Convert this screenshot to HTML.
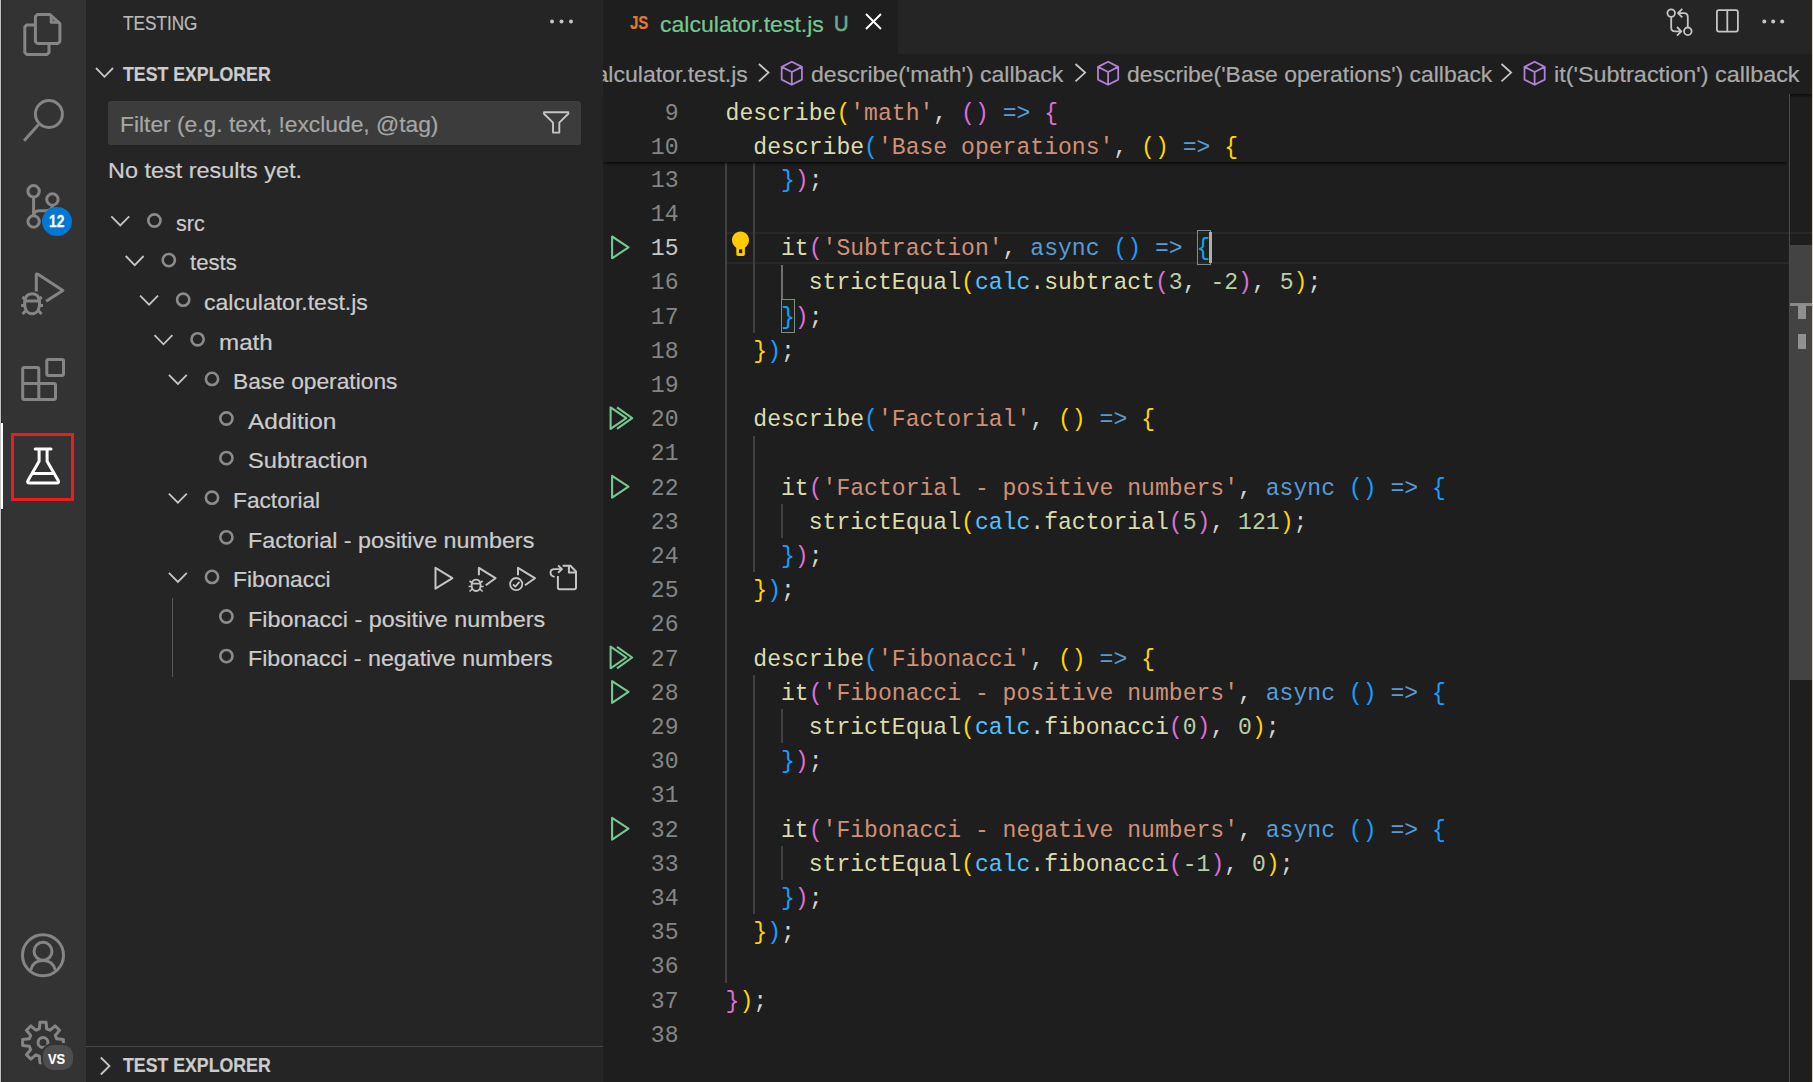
<!DOCTYPE html>
<html><head><meta charset="utf-8"><style>
*{box-sizing:border-box}
html,body{margin:0;padding:0;width:1813px;height:1082px;overflow:hidden;background:#1e1e1e}
.a{position:absolute}
.t{position:absolute;white-space:pre;font-family:'Liberation Sans',sans-serif;-webkit-text-stroke:0.2px currentColor}
.cl{position:absolute;height:34.2px;line-height:34.2px;font-family:'Liberation Mono',monospace;font-size:23.09px;white-space:pre}
.ln{position:absolute;left:620px;width:58.5px;text-align:right;height:34.2px;line-height:34.2px;font-family:'Liberation Mono',monospace;font-size:23.09px;color:#858585}
svg{position:absolute;overflow:visible}
</style></head><body>
<div class="a" style="left:0;top:0;width:1.3px;height:1082px;background:#c3c5c5"></div><div class="a" style="left:1811.6px;top:0;width:1.5px;height:1082px;background:#d6d2c6"></div><div class="a" style="left:1.3px;top:0;width:84.9px;height:1082px;background:#333333"></div><div class="a" style="left:1.3px;top:0;width:0.8px;height:1082px;background:#2a2a2a"></div><div class="a" style="left:86.2px;top:0;width:516.8px;height:1082px;background:#252526"></div><div class="a" style="left:603px;top:0;width:1208.6px;height:54px;background:#252526"></div><div class="a" style="left:603px;top:0;width:295.3px;height:54px;background:#1e1e1e"></div><div class="a" style="left:603px;top:54px;width:1208.6px;height:1028px;background:#1e1e1e"></div><svg style="left:0;top:0" width="86" height="1082" viewBox="0 0 86 1082" fill="none" stroke="#858585" stroke-width="3" stroke-linejoin="round">
<path d="M35.4,24.9 H26.8 L24.8,26.9 V52.5 L26.8,54.5 H47 L49,52.5 V45"/>
<path d="M37.4,14.5 H50 L59.9,23.6 V41.5 L57.9,43.5 H37.4 L35.4,41.5 V16.5 Z"/>
<path d="M51.2,15 V22.3 H59.5"/>
<circle cx="48.9" cy="114" r="13.5"/>
<path d="M38.6,124.4 L24.1,140.7" stroke-linecap="butt"/>
<circle cx="33.6" cy="191.3" r="5.7"/>
<circle cx="33.6" cy="221.5" r="5.7"/>
<circle cx="52.4" cy="199.5" r="5.7"/>
<path d="M33.6,197 V216"/>
<path d="M33.6,216 Q33.6,210.8 39,210.8 H46 Q52.4,210.8 52.4,205.2"/>
<path d="M36.3,291.4 V275 Q36.3,273.3 38,274.3 L62.9,290.4 L46.1,301.3"/>
<path d="M32.1,293.8 C26,293.8 24.6,299 24.6,303.5 C24.6,309.5 27.5,313.7 32.1,313.7 C36.7,313.7 39.6,309.5 39.6,303.5 C39.6,299 38.2,293.8 32.1,293.8 Z"/>
<path d="M25,301 H39.2 M22.5,297 L26,300 M41.7,297 L38.2,300 M21.2,305.5 H24.8 M39.4,305.5 H43 M22.5,314 L26,310.5 M41.7,314 L38.2,310.5" stroke-linecap="butt"/>
<path d="M48.3,359.5 H62 Q63.5,359.5 63.5,361 V373.9 Q63.5,375.4 62,375.4 H48.3 Q46.8,375.4 46.8,373.9 V361 Q46.8,359.5 48.3,359.5 Z"/>
<path d="M24.2,367.5 H37.3 Q38.8,367.5 38.8,369 V398 M22.7,383.5 H54 Q55.5,383.5 55.5,385 V398 Q55.5,399.5 54,399.5 H24.2 Q22.7,399.5 22.7,398 V369 Q22.7,367.5 24.2,367.5"/>
<circle cx="43" cy="955.3" r="20.5"/>
<circle cx="43" cy="951.3" r="9"/>
<path d="M30.8,970 Q33,960.5 43,960.5 Q53,960.5 55.2,970"/>
<path d="M39.32,1028.78 L39.96,1022.13 L46.04,1022.13 L46.68,1028.78 L50.10,1030.20 L55.25,1025.94 L59.56,1030.25 L55.30,1035.40 L56.72,1038.82 L63.37,1039.46 L63.37,1045.54 L56.72,1046.18 L55.30,1049.60 L59.56,1054.75 L55.25,1059.06 L50.10,1054.80 L46.68,1056.22 L46.04,1062.87 L39.96,1062.87 L39.32,1056.22 L35.90,1054.80 L30.75,1059.06 L26.44,1054.75 L30.70,1049.60 L29.28,1046.18 L22.63,1045.54 L22.63,1039.46 L29.28,1038.82 L30.70,1035.40 L26.44,1030.25 L30.75,1025.94 L35.90,1030.20 Z" stroke-width="3"/>
<circle cx="43" cy="1042.5" r="5"/>
</svg><div class="a" style="left:1.3px;top:422.8px;width:1.8px;height:86.4px;background:#ffffff"></div><div class="a" style="left:11px;top:433px;width:63px;height:68px;border:3px solid #ed1c1c"></div><svg style="left:0;top:0" width="86" height="1082" viewBox="0 0 86 1082" fill="none" stroke="#ffffff" stroke-width="3" stroke-linejoin="round" stroke-linecap="round">
<path d="M35.2,449.1 H51"/>
<path d="M39.1,449.5 V461.3 L28,480.5 Q26.8,483 29.5,483 H56.7 Q59.4,483 58.2,480.5 L47.1,461.3 V449.5"/>
<path d="M32.6,473.4 H53.6"/>
</svg><div class="a" style="left:42px;top:206.7px;width:30px;height:29.4px;border-radius:50%;background:#0078d4"></div><div class="t" style="left:49.10px;top:210.77px;font-size:15.6px;line-height:21.84px;color:#ffffff;font-weight:bold;transform:scaleX(0.88);transform-origin:0 0;-webkit-text-stroke:0.3px #fff;">12</div><div class="a" style="left:41.3px;top:1043.3px;width:33.6px;height:28.7px;border-radius:12px;background:#4d4d4d;border:2px solid #333333"></div><div class="t" style="left:47.90px;top:1048.72px;font-size:14.6px;line-height:20.44px;color:#ffffff;font-weight:bold;transform:scaleX(0.88);transform-origin:0 0;">VS</div><div class="t" style="left:123.30px;top:9.54px;font-size:19.55px;line-height:27.37px;color:#bbbbbb;transform:scaleX(0.88);transform-origin:0 0;">TESTING</div><svg style="left:0;top:0" width="603" height="60" fill="#c5c5c5"><circle cx="552" cy="21.5" r="2"/><circle cx="561.5" cy="21.5" r="2"/><circle cx="571" cy="21.5" r="2"/></svg><svg style="left:0;top:0" width="603" height="100" fill="none" stroke="#c5c5c5" stroke-width="1.8"><path d="M96,68 L104.5,76.8 L113,68"/></svg><div class="t" style="left:122.80px;top:60.60px;font-size:19.4px;line-height:27.16px;color:#cccccc;font-weight:bold;transform:scaleX(0.914);transform-origin:0 0;">TEST EXPLORER</div><div class="a" style="left:107.8px;top:101px;width:473.2px;height:44.4px;background:#3c3c3c;border-radius:3px"></div><div class="t" style="left:120.30px;top:108.61px;font-size:22.35px;line-height:31.29px;color:#a6a6a6;transform:scaleX(1.0206);transform-origin:0 0;">Filter (e.g. text, !exclude, @tag)</div><svg style="left:0;top:0" width="603" height="200" fill="none" stroke="#c5c5c5" stroke-width="1.9" stroke-linejoin="round"><path d="M544,112.3 H568.3 V113.8 L559.3,122.6 V132.6 H553 V122.6 L544,113.8 Z"/></svg><div class="t" style="left:108.20px;top:154.51px;font-size:22.35px;line-height:31.29px;color:#cccccc;transform:scaleX(1.0484);transform-origin:0 0;">No test results yet.</div><div class="t" style="left:175.50px;top:207.71px;font-size:22.35px;line-height:31.29px;color:#cccccc;transform:scaleX(0.9621);transform-origin:0 0;">src</div><div class="t" style="left:189.90px;top:247.31px;font-size:22.35px;line-height:31.29px;color:#cccccc;transform:scaleX(0.9936);transform-origin:0 0;">tests</div><div class="t" style="left:204.30px;top:286.91px;font-size:22.35px;line-height:31.29px;color:#cccccc;transform:scaleX(1.031);transform-origin:0 0;">calculator.test.js</div><div class="t" style="left:218.70px;top:326.51px;font-size:22.35px;line-height:31.29px;color:#cccccc;transform:scaleX(1.0813);transform-origin:0 0;">math</div><div class="t" style="left:233.10px;top:366.11px;font-size:22.35px;line-height:31.29px;color:#cccccc;transform:scaleX(1.0181);transform-origin:0 0;">Base operations</div><div class="t" style="left:247.50px;top:405.71px;font-size:22.35px;line-height:31.29px;color:#cccccc;transform:scaleX(1.0938);transform-origin:0 0;">Addition</div><div class="t" style="left:247.50px;top:445.31px;font-size:22.35px;line-height:31.29px;color:#cccccc;transform:scaleX(1.0595);transform-origin:0 0;">Subtraction</div><div class="t" style="left:233.10px;top:484.91px;font-size:22.35px;line-height:31.29px;color:#cccccc;transform:scaleX(1.0167);transform-origin:0 0;">Factorial</div><div class="t" style="left:247.50px;top:524.51px;font-size:22.35px;line-height:31.29px;color:#cccccc;transform:scaleX(1.0432);transform-origin:0 0;">Factorial - positive numbers</div><div class="t" style="left:233.10px;top:564.11px;font-size:22.35px;line-height:31.29px;color:#cccccc;transform:scaleX(1.0213);transform-origin:0 0;">Fibonacci</div><div class="t" style="left:247.50px;top:603.71px;font-size:22.35px;line-height:31.29px;color:#cccccc;transform:scaleX(1.0449);transform-origin:0 0;">Fibonacci - positive numbers</div><div class="t" style="left:247.50px;top:643.31px;font-size:22.35px;line-height:31.29px;color:#cccccc;transform:scaleX(1.039);transform-origin:0 0;">Fibonacci - negative numbers</div><svg style="left:0;top:0" width="603" height="1082" fill="none"><path d="M111.30,216.40 L120.30,225.50 L129.20,216.40" stroke="#c5c5c5" stroke-width="1.8"/><circle cx="154.40" cy="220.50" r="6.1" stroke="#8b8b8b" stroke-width="2.6"/><path d="M125.70,256.00 L134.70,265.10 L143.60,256.00" stroke="#c5c5c5" stroke-width="1.8"/><circle cx="168.80" cy="260.10" r="6.1" stroke="#8b8b8b" stroke-width="2.6"/><path d="M140.10,295.60 L149.10,304.70 L158.00,295.60" stroke="#c5c5c5" stroke-width="1.8"/><circle cx="183.20" cy="299.70" r="6.1" stroke="#8b8b8b" stroke-width="2.6"/><path d="M154.50,335.20 L163.50,344.30 L172.40,335.20" stroke="#c5c5c5" stroke-width="1.8"/><circle cx="197.60" cy="339.30" r="6.1" stroke="#8b8b8b" stroke-width="2.6"/><path d="M168.90,374.80 L177.90,383.90 L186.80,374.80" stroke="#c5c5c5" stroke-width="1.8"/><circle cx="212.00" cy="378.90" r="6.1" stroke="#8b8b8b" stroke-width="2.6"/><circle cx="226.40" cy="418.50" r="6.1" stroke="#8b8b8b" stroke-width="2.6"/><circle cx="226.40" cy="458.10" r="6.1" stroke="#8b8b8b" stroke-width="2.6"/><path d="M168.90,493.60 L177.90,502.70 L186.80,493.60" stroke="#c5c5c5" stroke-width="1.8"/><circle cx="212.00" cy="497.70" r="6.1" stroke="#8b8b8b" stroke-width="2.6"/><circle cx="226.40" cy="537.30" r="6.1" stroke="#8b8b8b" stroke-width="2.6"/><path d="M168.90,572.80 L177.90,581.90 L186.80,572.80" stroke="#c5c5c5" stroke-width="1.8"/><circle cx="212.00" cy="576.90" r="6.1" stroke="#8b8b8b" stroke-width="2.6"/><circle cx="226.40" cy="616.50" r="6.1" stroke="#8b8b8b" stroke-width="2.6"/><circle cx="226.40" cy="656.10" r="6.1" stroke="#8b8b8b" stroke-width="2.6"/></svg><div class="a" style="left:171.7px;top:598px;width:1.4px;height:78.8px;background:#585858"></div><svg style="left:0;top:0" width="603" height="1082" fill="none" stroke="#c5c5c5" stroke-width="2" stroke-linejoin="round">
<path d="M435.5,567.8 V588.7 L452.4,578.2 Z"/>
<path d="M478.9,575.2 V567.8 L495.5,578.2 L485.7,585.3"/>
<path d="M476.1,579.6 C472.8,579.6 471.6,582 471.6,585.2 C471.6,588.6 473.5,591 476.1,591 C478.7,591 480.6,588.6 480.6,585.2 C480.6,582 479.4,579.6 476.1,579.6 Z" stroke-width="1.8"/>
<path d="M471.8,583.6 H480.4 M469.5,581 L472.3,583 M482.7,581 L479.9,583 M468.6,586.5 H471.6 M480.6,586.5 H483.6 M469.5,591.5 L472.3,589 M482.7,591.5 L479.9,589" stroke-width="1.6"/>
<path d="M518,575.2 V567.8 L534.9,578.2 L525,585.3"/>
<circle cx="516.2" cy="584.1" r="6.1" stroke-width="1.8"/>
<path d="M513,584.5 L515.3,586.6 L519.5,581.8" stroke-width="1.8"/>
<path d="M557.9,576 V587.5 Q557.9,589.2 559.6,589.2 H574.3 Q576,589.2 576,587.5 V571.5 L570.4,565.8 H562.6"/>
<path d="M568.9,566 V572.4 H575.8"/>
<path d="M554.6,576.9 C551.5,576.3 550.5,574.5 550.5,572.6 C550.5,570.5 552,569.1 554.6,569.1 H562 M558.1,565.5 L562,569.1 L558.1,572.8" stroke-width="1.9"/>
</svg><div class="a" style="left:86.2px;top:1045.6px;width:516.8px;height:1.4px;background:#474747"></div><svg style="left:0;top:0" width="603" height="1082" fill="none" stroke="#c5c5c5" stroke-width="1.8"><path d="M100.8,1057.5 L109.5,1066 L100.8,1074.5"/></svg><div class="t" style="left:122.70px;top:1052.00px;font-size:19.4px;line-height:27.16px;color:#cccccc;font-weight:bold;transform:scaleX(0.914);transform-origin:0 0;">TEST EXPLORER</div><div class="t" style="left:629.70px;top:9.73px;font-size:18.8px;line-height:26.32px;color:#e37933;font-weight:bold;transform:scaleX(0.8);transform-origin:0 0;">JS</div><div class="t" style="left:660.10px;top:8.51px;font-size:22.35px;line-height:31.29px;color:#73c991;transform:scaleX(1.031);transform-origin:0 0;">calculator.test.js</div><div class="t" style="left:833.90px;top:8.80px;font-size:21.6px;line-height:30.24px;color:#66ad85;transform:scaleX(0.93);transform-origin:0 0;-webkit-text-stroke:0.7px #66ad85;">U</div><svg style="left:0;top:0" width="900" height="60" fill="none" stroke="#ffffff" stroke-width="1.9"><path d="M866,14 L881,29 M881,14 L866,29"/></svg><svg style="left:0;top:0" width="1813" height="60" fill="none" stroke="#c5c5c5" stroke-width="1.8" stroke-linejoin="round">
<circle cx="1671.2" cy="13.1" r="3.8"/>
<circle cx="1687.8" cy="31.3" r="3.8"/>
<path d="M1671.2,17 V27.5 Q1671.2,31.3 1675,31.3 H1681.3 M1677,27 L1681.3,31.3 L1677,35.6"/>
<path d="M1687.8,27.4 V17 Q1687.8,13.1 1684,13.1 H1678 M1682.3,8.8 L1678,13.1 L1682.3,17.4"/>
<rect x="1716.9" y="10.2" width="21" height="21.4" rx="2"/>
<path d="M1727.3,10.2 V31.6"/>
</svg><svg style="left:0;top:0" width="1813" height="60" fill="#c5c5c5"><circle cx="1764.3" cy="21.5" r="2"/><circle cx="1773.2" cy="21.5" r="2"/><circle cx="1782.2" cy="21.5" r="2"/></svg><div class="t" style="left:584.10px;top:59.41px;font-size:22.35px;line-height:31.29px;color:#a9a9a9;transform:scaleX(1.031);transform-origin:0 0;clip-path:inset(0 0 0 18.2px);">calculator.test.js</div><svg style="left:0;top:0" width="1813" height="100" fill="none"><path d="M758.90,64 L768.50,72.6 L758.90,81.3" stroke="#c5c5c5" stroke-width="1.8"/><path d="M791.80,61.7 L801.90,66.9 V79.6 L791.80,84.8 L781.70,79.6 V66.9 Z M781.70,66.9 L791.80,72 L801.90,66.9 M791.80,72 V84.8" stroke="#b180d7" stroke-width="1.8" stroke-linejoin="round"/><path d="M1075.50,64 L1085.10,72.6 L1075.50,81.3" stroke="#c5c5c5" stroke-width="1.8"/><path d="M1108.10,61.7 L1118.20,66.9 V79.6 L1108.10,84.8 L1098.00,79.6 V66.9 Z M1098.00,66.9 L1108.10,72 L1118.20,66.9 M1108.10,72 V84.8" stroke="#b180d7" stroke-width="1.8" stroke-linejoin="round"/><path d="M1501.50,64 L1511.10,72.6 L1501.50,81.3" stroke="#c5c5c5" stroke-width="1.8"/><path d="M1534.60,61.7 L1544.70,66.9 V79.6 L1534.60,84.8 L1524.50,79.6 V66.9 Z M1524.50,66.9 L1534.60,72 L1544.70,66.9 M1534.60,72 V84.8" stroke="#b180d7" stroke-width="1.8" stroke-linejoin="round"/></svg><div class="t" style="left:811.20px;top:59.41px;font-size:22.35px;line-height:31.29px;color:#a9a9a9;transform:scaleX(1.032);transform-origin:0 0;">describe('math') callback</div><div class="t" style="left:1127.00px;top:59.41px;font-size:22.35px;line-height:31.29px;color:#a9a9a9;transform:scaleX(1.0254);transform-origin:0 0;">describe('Base operations') callback</div><div class="t" style="left:1554.00px;top:59.41px;font-size:22.35px;line-height:31.29px;color:#a9a9a9;transform:scaleX(1.047);transform-origin:0 0;">it('Subtraction') callback</div><div class="a" style="left:725px;top:231.5px;width:1086.6px;height:32.6px;border-top:2.4px solid #282828;border-bottom:2.2px solid #282828"></div><div class="a" style="left:725.1px;top:162.0px;width:2px;height:820.8px;background:#404040"></div><div class="a" style="left:752.8px;top:162.0px;width:2px;height:171.0px;background:#404040"></div><div class="a" style="left:752.8px;top:435.6px;width:2px;height:136.8px;background:#404040"></div><div class="a" style="left:752.8px;top:675.0px;width:2px;height:239.4px;background:#404040"></div><div class="a" style="left:780.5px;top:264.6px;width:2px;height:34.2px;background:#707070"></div><div class="a" style="left:780.5px;top:504.0px;width:2px;height:34.2px;background:#404040"></div><div class="a" style="left:780.5px;top:709.2px;width:2px;height:34.2px;background:#404040"></div><div class="a" style="left:780.5px;top:846.0px;width:2px;height:34.2px;background:#404040"></div><div class="a" style="left:781.0px;top:298.8px;width:13.86px;height:34.2px;background:rgba(0,100,0,0.1);border:1.8px solid #888888"></div><div class="a" style="left:1196.7px;top:230.4px;width:13.86px;height:34.2px;background:rgba(0,100,0,0.1);border:1.8px solid #888888"></div><div class="ln" style="top:163.8px;">13</div><div class="cl" style="left:725.6px;top:163.8px"><span style="color:#d4d4d4">    </span><span style="color:#179fff">}</span><span style="color:#da70d6">)</span><span style="color:#d4d4d4">;</span></div><div class="ln" style="top:198.0px;">14</div><div class="ln" style="top:232.2px;color:#c6c6c6">15</div><div class="cl" style="left:725.6px;top:232.2px"><span style="color:#d4d4d4">    </span><span style="color:#dcdcaa">it</span><span style="color:#da70d6">(</span><span style="color:#ce9178">'Subtraction'</span><span style="color:#d4d4d4">, </span><span style="color:#569cd6">async</span><span style="color:#d4d4d4"> </span><span style="color:#179fff">()</span><span style="color:#d4d4d4"> </span><span style="color:#569cd6">=&gt;</span><span style="color:#d4d4d4"> </span><span style="color:#179fff">{</span></div><div class="ln" style="top:266.4px;">16</div><div class="cl" style="left:725.6px;top:266.4px"><span style="color:#d4d4d4">      </span><span style="color:#dcdcaa">strictEqual</span><span style="color:#ffd700">(</span><span style="color:#4fc1ff">calc</span><span style="color:#d4d4d4">.</span><span style="color:#dcdcaa">subtract</span><span style="color:#da70d6">(</span><span style="color:#b5cea8">3</span><span style="color:#d4d4d4">, </span><span style="color:#b5cea8">-2</span><span style="color:#da70d6">)</span><span style="color:#d4d4d4">, </span><span style="color:#b5cea8">5</span><span style="color:#ffd700">)</span><span style="color:#d4d4d4">;</span></div><div class="ln" style="top:300.6px;">17</div><div class="cl" style="left:725.6px;top:300.6px"><span style="color:#d4d4d4">    </span><span style="color:#179fff">}</span><span style="color:#da70d6">)</span><span style="color:#d4d4d4">;</span></div><div class="ln" style="top:334.8px;">18</div><div class="cl" style="left:725.6px;top:334.8px"><span style="color:#d4d4d4">  </span><span style="color:#ffd700">}</span><span style="color:#179fff">)</span><span style="color:#d4d4d4">;</span></div><div class="ln" style="top:369.0px;">19</div><div class="ln" style="top:403.2px;">20</div><div class="cl" style="left:725.6px;top:403.2px"><span style="color:#d4d4d4">  </span><span style="color:#dcdcaa">describe</span><span style="color:#179fff">(</span><span style="color:#ce9178">'Factorial'</span><span style="color:#d4d4d4">, </span><span style="color:#ffd700">()</span><span style="color:#d4d4d4"> </span><span style="color:#569cd6">=&gt;</span><span style="color:#d4d4d4"> </span><span style="color:#ffd700">{</span></div><div class="ln" style="top:437.4px;">21</div><div class="ln" style="top:471.6px;">22</div><div class="cl" style="left:725.6px;top:471.6px"><span style="color:#d4d4d4">    </span><span style="color:#dcdcaa">it</span><span style="color:#da70d6">(</span><span style="color:#ce9178">'Factorial - positive numbers'</span><span style="color:#d4d4d4">, </span><span style="color:#569cd6">async</span><span style="color:#d4d4d4"> </span><span style="color:#179fff">()</span><span style="color:#d4d4d4"> </span><span style="color:#569cd6">=&gt;</span><span style="color:#d4d4d4"> </span><span style="color:#179fff">{</span></div><div class="ln" style="top:505.8px;">23</div><div class="cl" style="left:725.6px;top:505.8px"><span style="color:#d4d4d4">      </span><span style="color:#dcdcaa">strictEqual</span><span style="color:#ffd700">(</span><span style="color:#4fc1ff">calc</span><span style="color:#d4d4d4">.</span><span style="color:#dcdcaa">factorial</span><span style="color:#da70d6">(</span><span style="color:#b5cea8">5</span><span style="color:#da70d6">)</span><span style="color:#d4d4d4">, </span><span style="color:#b5cea8">121</span><span style="color:#ffd700">)</span><span style="color:#d4d4d4">;</span></div><div class="ln" style="top:540.0px;">24</div><div class="cl" style="left:725.6px;top:540.0px"><span style="color:#d4d4d4">    </span><span style="color:#179fff">}</span><span style="color:#da70d6">)</span><span style="color:#d4d4d4">;</span></div><div class="ln" style="top:574.2px;">25</div><div class="cl" style="left:725.6px;top:574.2px"><span style="color:#d4d4d4">  </span><span style="color:#ffd700">}</span><span style="color:#179fff">)</span><span style="color:#d4d4d4">;</span></div><div class="ln" style="top:608.4px;">26</div><div class="ln" style="top:642.6px;">27</div><div class="cl" style="left:725.6px;top:642.6px"><span style="color:#d4d4d4">  </span><span style="color:#dcdcaa">describe</span><span style="color:#179fff">(</span><span style="color:#ce9178">'Fibonacci'</span><span style="color:#d4d4d4">, </span><span style="color:#ffd700">()</span><span style="color:#d4d4d4"> </span><span style="color:#569cd6">=&gt;</span><span style="color:#d4d4d4"> </span><span style="color:#ffd700">{</span></div><div class="ln" style="top:676.8px;">28</div><div class="cl" style="left:725.6px;top:676.8px"><span style="color:#d4d4d4">    </span><span style="color:#dcdcaa">it</span><span style="color:#da70d6">(</span><span style="color:#ce9178">'Fibonacci - positive numbers'</span><span style="color:#d4d4d4">, </span><span style="color:#569cd6">async</span><span style="color:#d4d4d4"> </span><span style="color:#179fff">()</span><span style="color:#d4d4d4"> </span><span style="color:#569cd6">=&gt;</span><span style="color:#d4d4d4"> </span><span style="color:#179fff">{</span></div><div class="ln" style="top:711.0px;">29</div><div class="cl" style="left:725.6px;top:711.0px"><span style="color:#d4d4d4">      </span><span style="color:#dcdcaa">strictEqual</span><span style="color:#ffd700">(</span><span style="color:#4fc1ff">calc</span><span style="color:#d4d4d4">.</span><span style="color:#dcdcaa">fibonacci</span><span style="color:#da70d6">(</span><span style="color:#b5cea8">0</span><span style="color:#da70d6">)</span><span style="color:#d4d4d4">, </span><span style="color:#b5cea8">0</span><span style="color:#ffd700">)</span><span style="color:#d4d4d4">;</span></div><div class="ln" style="top:745.2px;">30</div><div class="cl" style="left:725.6px;top:745.2px"><span style="color:#d4d4d4">    </span><span style="color:#179fff">}</span><span style="color:#da70d6">)</span><span style="color:#d4d4d4">;</span></div><div class="ln" style="top:779.4px;">31</div><div class="ln" style="top:813.6px;">32</div><div class="cl" style="left:725.6px;top:813.6px"><span style="color:#d4d4d4">    </span><span style="color:#dcdcaa">it</span><span style="color:#da70d6">(</span><span style="color:#ce9178">'Fibonacci - negative numbers'</span><span style="color:#d4d4d4">, </span><span style="color:#569cd6">async</span><span style="color:#d4d4d4"> </span><span style="color:#179fff">()</span><span style="color:#d4d4d4"> </span><span style="color:#569cd6">=&gt;</span><span style="color:#d4d4d4"> </span><span style="color:#179fff">{</span></div><div class="ln" style="top:847.8px;">33</div><div class="cl" style="left:725.6px;top:847.8px"><span style="color:#d4d4d4">      </span><span style="color:#dcdcaa">strictEqual</span><span style="color:#ffd700">(</span><span style="color:#4fc1ff">calc</span><span style="color:#d4d4d4">.</span><span style="color:#dcdcaa">fibonacci</span><span style="color:#da70d6">(</span><span style="color:#b5cea8">-1</span><span style="color:#da70d6">)</span><span style="color:#d4d4d4">, </span><span style="color:#b5cea8">0</span><span style="color:#ffd700">)</span><span style="color:#d4d4d4">;</span></div><div class="ln" style="top:882.0px;">34</div><div class="cl" style="left:725.6px;top:882.0px"><span style="color:#d4d4d4">    </span><span style="color:#179fff">}</span><span style="color:#da70d6">)</span><span style="color:#d4d4d4">;</span></div><div class="ln" style="top:916.2px;">35</div><div class="cl" style="left:725.6px;top:916.2px"><span style="color:#d4d4d4">  </span><span style="color:#ffd700">}</span><span style="color:#179fff">)</span><span style="color:#d4d4d4">;</span></div><div class="ln" style="top:950.4px;">36</div><div class="ln" style="top:984.6px;">37</div><div class="cl" style="left:725.6px;top:984.6px"><span style="color:#da70d6">}</span><span style="color:#ffd700">)</span><span style="color:#d4d4d4">;</span></div><div class="ln" style="top:1018.8px;">38</div><div class="a" style="left:1209.0px;top:231.9px;width:3px;height:31px;background:#aeafad"></div><svg style="left:0;top:0" width="800" height="300"><path d="M736.3,247.8 C733.8,246 732,243.5 732,240 C732,235.2 735.8,231.4 740.5,231.4 C745.2,231.4 749,235.2 749,240 C749,243.5 747.2,246 744.9,247.8 V254.2 Q744.9,256 743.1,256 H738.1 Q736.3,256 736.3,254.2 Z" fill="#ffcc00"/><rect x="739" y="249.3" width="3.2" height="3.8" fill="#1e1e1e"/></svg><svg style="left:0;top:0" width="700" height="1082" fill="none" stroke="#73c991" stroke-width="2.1" stroke-linejoin="round"><path d="M612.1,236.50 V258.30 L628.5,247.30 Z" /><path d="M610.6,407.30 V428.90 L626.3,418.10 Z M617,407.40 L632.2,418.10 L617,428.90"/><path d="M612.1,475.90 V497.70 L628.5,486.70 Z" /><path d="M610.6,646.70 V668.30 L626.3,657.50 Z M617,646.80 L632.2,657.50 L617,668.30"/><path d="M612.1,681.10 V702.90 L628.5,691.90 Z" /><path d="M612.1,817.90 V839.70 L628.5,828.70 Z" /></svg><div class="a" style="left:603px;top:93.6px;width:1185px;height:68.4px;background:#1e1e1e;box-shadow:0 3px 3px -2px #000"></div><div class="ln" style="top:96.6px">9</div><div class="cl" style="left:725.6px;top:96.6px"><span style="color:#dcdcaa">describe</span><span style="color:#ffd700">(</span><span style="color:#ce9178">'math'</span><span style="color:#d4d4d4">, </span><span style="color:#da70d6">()</span><span style="color:#d4d4d4"> </span><span style="color:#569cd6">=&gt;</span><span style="color:#d4d4d4"> </span><span style="color:#da70d6">{</span></div><div class="ln" style="top:130.8px">10</div><div class="cl" style="left:725.6px;top:130.8px"><span style="color:#d4d4d4">  </span><span style="color:#dcdcaa">describe</span><span style="color:#179fff">(</span><span style="color:#ce9178">'Base operations'</span><span style="color:#d4d4d4">, </span><span style="color:#ffd700">()</span><span style="color:#d4d4d4"> </span><span style="color:#569cd6">=&gt;</span><span style="color:#d4d4d4"> </span><span style="color:#ffd700">{</span></div><div class="a" style="left:1789.2px;top:93.6px;width:1px;height:988.4px;background:#4a4a4a"></div><div class="a" style="left:1790px;top:93.6px;width:21.6px;height:4px;background:linear-gradient(#000,transparent);opacity:0.6"></div><div class="a" style="left:1790px;top:245px;width:21.6px;height:435px;background:#434343"></div><div class="a" style="left:1790px;top:303.3px;width:21.6px;height:2.6px;background:#8a8a8a"></div><div class="a" style="left:1798.1px;top:304px;width:7.8px;height:14.8px;background:#909090"></div><div class="a" style="left:1798.1px;top:334px;width:7.8px;height:15.2px;background:#909090"></div>
</body></html>
